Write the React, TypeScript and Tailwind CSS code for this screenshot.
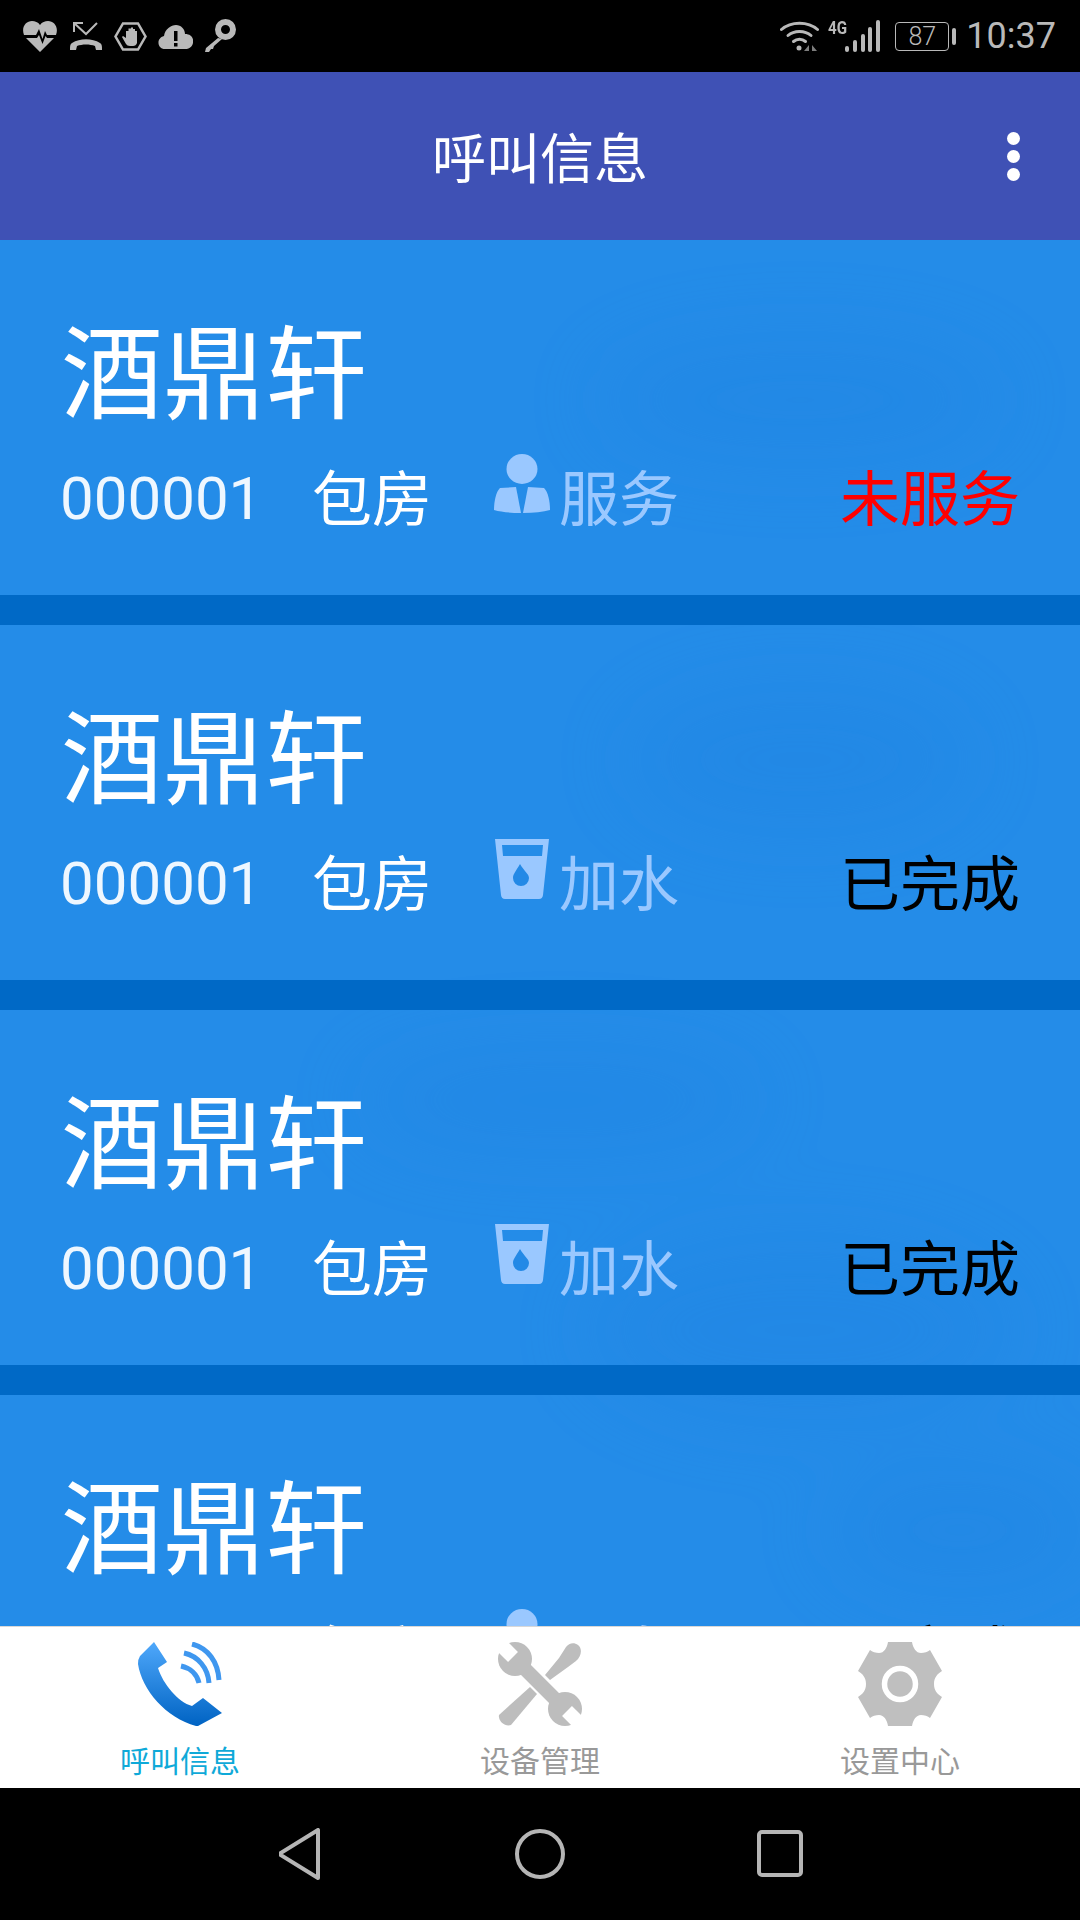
import React from 'react';

type CallStatus = 'pending' | 'done';

interface CallCard {
  id: number;
  kind: 'service' | 'water';
  label: string;
  status: CallStatus;
}

const cards: CallCard[] = [
  { id: 1, kind: 'service', label: '服务', status: 'pending' },
  { id: 2, kind: 'water', label: '加水', status: 'done' },
  { id: 3, kind: 'water', label: '加水', status: 'done' },
  { id: 4, kind: 'service', label: '服务', status: 'done' },
];

const PersonIcon = () => (
  <svg width="56" height="60" viewBox="0 0 56 60" fill="#9ac8ff">
    <ellipse cx="28" cy="15" rx="15.500" ry="15" />
    <path d="M6 34 L22 33 L27 59 C16 59 7 58 0 56 C0 47 2 38 6 34 Z" />
    <path d="M50 34 L34 33 L29 59 C40 59 49 58 56 56 C56 47 54 38 50 34 Z" />
  </svg>
);

const CupIcon = () => (
  <svg width="56" height="60" viewBox="0 0 54 60" className="-mr-0.5">
    <path
      fillRule="evenodd"
      fill="#9ac8ff"
      d="M0 0 H54 L48 56 Q47.500 60 44 60 H10 Q6.500 60 6 56 Z M7 6 L8 17 H47 L48 6 Z"
    />
    <path d="M25 25 C21 32 18 35 18 39 A8 8 0 0 0 34 39 C34 35 29 32 25 25 Z" fill="#2389e6" />
  </svg>
);

const StatusIcons = () => (
  <div className="flex items-center">
    <svg width="34" height="31" viewBox="0 0 34 31" className="ml-[23px]" fill="#b9b9b9">
      <path d="M1 14 C-2 6 3 0 9 0 C12 0 15 1 17 4 C19 1 22 0 25 0 C31 0 36 6 33 14 H24 L22 10 L19.500 18 L16 8 L13 14 Z" />
      <path d="M3 17 H14 L16 14 L19.500 23 L22.500 15 L24 17 H31 L17 31 Z" />
    </svg>
    <svg width="34" height="29" viewBox="0 0 34 29" className="ml-3" fill="none" stroke="#b9b9b9">
      <path d="M14 1 H5 V10 M5 1 L17 12 L28 1" strokeWidth="2" />
      <path d="M1 28 C1 24 1 22 3 21 C11 16 23 16 31 21 C33 22 33 24 33 28 H27 L26 24 C21 22 13 22 8 24 L7 28 Z" fill="#b9b9b9" stroke="none" />
    </svg>
    <svg width="33" height="29" viewBox="0 0 33 29" className="ml-[11px]" fill="none">
      <path d="M9 1.500 H24 L31.500 14.500 L24 27.500 H9 L1.500 14.500 Z" stroke="#b9b9b9" strokeWidth="2.500" />
      <path d="M12 9 V16 L9 14 L8 15 L12 22 Q13 24 16 24 H19 Q22 24 23 21 V9 H21 V14 V7 H19 V14 V5.500 H17 V14 V6.500 H14.500 V14 V9 Z" fill="#b9b9b9" />
    </svg>
    <svg width="35" height="24" viewBox="0 0 35 24" className="ml-[11px] mt-0.5">
      <path d="M7 24 C-1 24 -2 13 6 11 C7 4 13 0 18 0 C23 0 27 4 27 9 C33 9 36 13 35 18 C34 22 31 24 27 24 Z" fill="#b9b9b9" />
      <rect x="16" y="6" width="3.500" height="10" fill="#000" />
      <rect x="16" y="18" width="3.500" height="3.500" fill="#000" />
    </svg>
    <svg width="32" height="34" viewBox="0 0 32 34" className="ml-[11px]" fill="none">
      <circle cx="21.500" cy="10.500" r="7.500" stroke="#b9b9b9" strokeWidth="6" />
      <path d="M14 19 L2 29 L1 33 H5 L7 30 L9 30 L10 27 L18 20 Z" fill="#b9b9b9" />
    </svg>
  </div>
);

const StatusRight = () => (
  <div className="flex items-center text-[#b9b9b9]">
    <svg width="40" height="32" viewBox="0 0 40 32" fill="none" stroke="#b9b9b9" strokeWidth="3" strokeLinecap="round">
      <path d="M1.500 9.500 C11 1 28 1 37.500 9.500" />
      <path d="M8 15.500 C14 10 25 10 31 15.500" />
      <path d="M13.500 21.500 C17 18.500 22 18.500 25.500 21.500" />
      <circle cx="19" cy="28" r="2.500" fill="#b9b9b9" stroke="none" />
      <path d="M29 25 V31 H24 Z M32 25 V31 H37 Z" fill="#7d7d7d" stroke="none" />
    </svg>
    <div className="relative ml-2 w-[52px] h-[32px]">
      <span className="absolute left-0 -top-[2px] text-[19px] leading-[20px] font-bold font-['Roboto',sans-serif] scale-x-[0.8] origin-left">4G</span>
      <svg width="35" height="32" viewBox="0 0 35 32" className="absolute left-[17px] top-0" fill="#b9b9b9">
        <rect x="0" y="26" width="4" height="6" rx="2" />
        <rect x="8" y="20" width="4" height="12" rx="2" />
        <rect x="16" y="14" width="4" height="18" rx="2" />
        <rect x="23" y="7" width="4" height="25" rx="2" />
        <rect x="31" y="0" width="4" height="32" rx="2" />
      </svg>
    </div>
    <div className="ml-[15px] flex items-center">
      <div className="w-[54px] h-[29px] rounded-[4px] border-[1.500px] border-[#b9b9b9] flex items-center justify-center text-[25px] leading-none font-light font-['Roboto',sans-serif]">
        87
      </div>
      <div className="ml-[3px] w-[4px] h-[17px] rounded-[2px] bg-[#b9b9b9]" />
    </div>
    <span className="ml-[10px] text-[36px] leading-none font-['Roboto',sans-serif]">10:37</span>
  </div>
);

const Card = ({ item }: { item: CallCard }) => (
  <div className="relative h-[355px] shrink-0 pl-[61px] pr-[60px] pt-[78px] text-white">
    <div className="text-[102px] leading-[116px]">酒鼎轩</div>
    <div className="flex items-start mt-[20px] -ml-px text-[60px] leading-[70px]">
      <span className="mt-[10px] w-[252px] text-[#eef7ff]">000001</span>
      <span className="mt-[12px] w-[182px]">包房</span>
      <div className="w-[65px]">{item.kind === 'service' ? <PersonIcon /> : <CupIcon />}</div>
      <span className="mt-[12px] text-[#9ac8ff]">{item.label}</span>
      {item.status === 'pending' ? (
        <span className="mt-[12px] ml-auto text-[#ff0000]">未服务</span>
      ) : (
        <span className="mt-[12px] ml-auto text-black">已完成</span>
      )}
    </div>
  </div>
);

const PhoneIcon = () => (
  <svg width="84" height="84" viewBox="0 0 84 84">
    <defs>
      <linearGradient id="phoneGrad" x1="0" y1="0" x2="0" y2="1">
        <stop offset="0" stopColor="#4fa8fb" />
        <stop offset="1" stopColor="#0063c3" />
      </linearGradient>
    </defs>
    <path
      fill="url(#phoneGrad)"
      d="M16 0 L2 14 Q0 17 0 22 C4 48 28 76 58 84 L60 84 L84 71 L65 56 L54 64 C40 60 25 42 20 26 L29 20 Z"
    />
    <g fill="none" stroke="#3f97ef" strokeWidth="5">
      <path d="M54 2 C70 6 80 20 81 38" />
      <path d="M46 11 C60 14 70 26 71 41" />
      <path d="M43 24 C52 26 59 32 61 41" />
    </g>
  </svg>
);

const ToolsIcon = () => (
  <svg width="84" height="84" viewBox="0 0 84 84">
    <g fill="#bdbdbd">
      <path d="M80 3 C85 7 83 15 78 19 L70 25 L52 38 L47 33 L61 16 L68 5 C71 1 76 0 80 3 Z" />
      <path d="M32 45 L39 52 L13 83 C7 85 0 79 1 73 Z" />
      <circle cx="17" cy="17" r="17" />
      <circle cx="67" cy="67" r="17" />
    </g>
    <path d="M17 17 L67 67" stroke="#bdbdbd" strokeWidth="14" />
    <path d="M-2 -2 L15 15" stroke="#ffffff" strokeWidth="14" />
    <path d="M86 86 L69 69" stroke="#ffffff" strokeWidth="14" />
  </svg>
);

const GearIcon = () => (
  <svg width="84" height="84" viewBox="0 0 84 84" fill="#bfbfbf">
    <path d="M30 0 H54 C55 6 58 11 63 11 C66 11 70 10 72 8 L84 29 C79 32 76 36 76 42 C76 48 79 52 84 55 L72 76 C70 74 66 73 63 73 C58 73 55 78 54 84 H30 C29 78 26 73 21 73 C18 73 14 74 12 76 L0 55 C5 52 8 48 8 42 C8 36 5 32 0 29 L12 8 C14 10 18 11 21 11 C26 11 29 6 30 0 Z" />
    <circle cx="42" cy="42" r="15.500" fill="none" stroke="#ffffff" strokeWidth="5.500" />
  </svg>
);

const tabs = [
  { label: '呼叫信息', icon: <PhoneIcon />, active: true },
  { label: '设备管理', icon: <ToolsIcon />, active: false },
  { label: '设置中心', icon: <GearIcon />, active: false },
];

export default function App() {
  return (
    <div className="w-[1080px] h-[1920px] flex flex-col bg-black overflow-hidden font-['Roboto','Noto_Sans_CJK_SC',sans-serif]">
      {/* Status bar */}
      <div className="h-[72px] shrink-0 flex items-center justify-between bg-black pr-[24px]">
        <StatusIcons />
        <StatusRight />
      </div>

      {/* Title bar */}
      <div className="relative h-[168px] shrink-0 flex items-center justify-center pt-[8px] bg-[#3f51b5] text-white text-[54px]">
        呼叫信息
        <div className="absolute right-[60px] top-[60px] flex flex-col gap-[5px]">
          <span className="w-[13px] h-[13px] rounded-full bg-white" />
          <span className="w-[13px] h-[13px] rounded-full bg-white" />
          <span className="w-[13px] h-[13px] rounded-full bg-white" />
        </div>
      </div>

      {/* Call list */}
      <div className="relative h-[1386px] shrink-0 overflow-hidden bg-[#248ce8] flex flex-col">
        {/* faint mottled texture of the background picture */}
        <svg width="1080" height="1386" viewBox="0 0 1080 1386" className="absolute inset-0 pointer-events-none">
          <defs>
            <filter id="soft" x="-50%" y="-50%" width="200%" height="200%">
              <feGaussianBlur stdDeviation="40" />
            </filter>
          </defs>
          <g filter="url(#soft)" fill="#1a7ede" opacity="0.25">
            <ellipse cx="800" cy="160" rx="200" ry="60" />
            <ellipse cx="800" cy="520" rx="170" ry="70" />
            <ellipse cx="560" cy="860" rx="200" ry="50" />
            <ellipse cx="800" cy="1090" rx="210" ry="90" />
            <ellipse cx="960" cy="1290" rx="130" ry="60" />
          </g>
        </svg>
        {cards.map((item, i) => (
          <React.Fragment key={item.id}>
            <Card item={item} />
            {i < cards.length - 1 && <div className="relative h-[30px] shrink-0 bg-[#0069c6]" />}
          </React.Fragment>
        ))}
      </div>

      {/* Bottom tabs */}
      <div className="h-[162px] shrink-0 grid grid-cols-3 bg-white border-t border-[#d8d8d8]">
        {tabs.map(tab => (
          <div key={tab.label} className="flex flex-col items-center pt-[15px]">
            {tab.icon}
            <span className={`mt-[18px] text-[30px] leading-[36px] ${tab.active ? 'text-[#0fa9d8]' : 'text-[#999999]'}`}>
              {tab.label}
            </span>
          </div>
        ))}
      </div>

      {/* Android nav */}
      <div className="h-[132px] shrink-0 flex items-center justify-center bg-black">
        <svg width="580" height="52" viewBox="0 0 580 52" fill="none" stroke="#b5b5b5" strokeWidth="4" strokeLinejoin="round" className="ml-[58px]">
          <path d="M2 26 L41 2 V50 Z" transform="translate(-2 0)" />
          <circle cx="261" cy="26" r="23" />
          <rect x="480" y="4" width="42" height="43" rx="3" />
        </svg>
      </div>
    </div>
  );
}
